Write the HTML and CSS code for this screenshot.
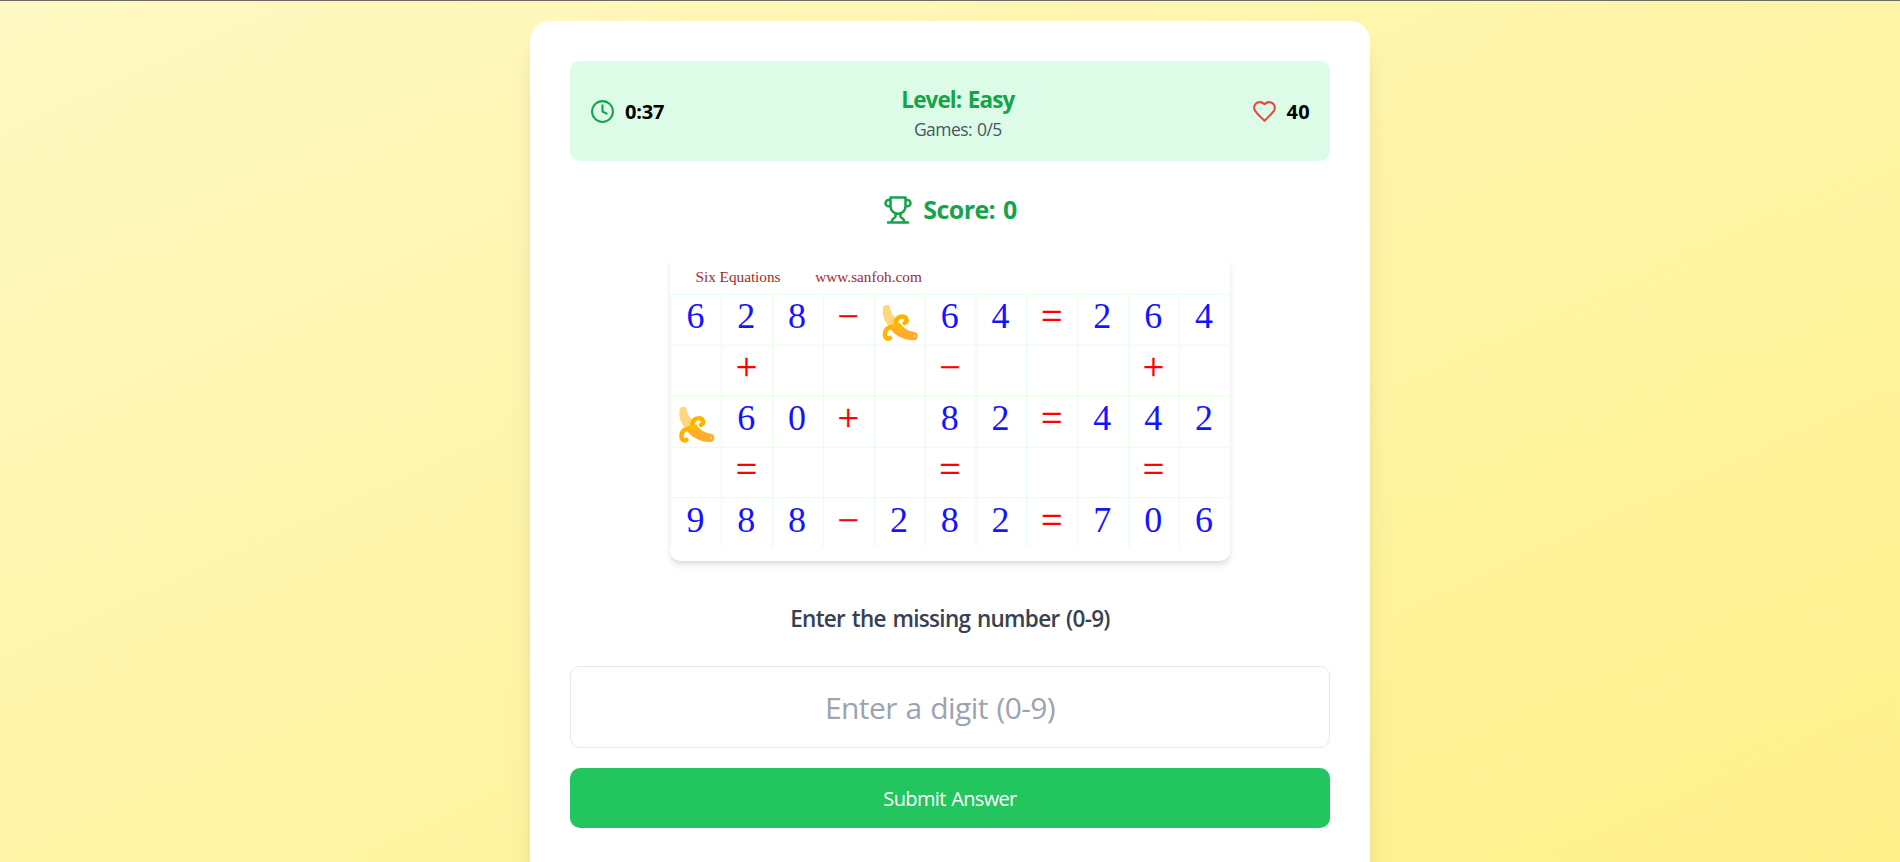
FILE: index.html
```html
<!DOCTYPE html>
<html lang="en">
<head>
<meta charset="utf-8">
<title>Banana Game</title>
<link rel="stylesheet" href="styles.css">
</head>
<body>
<main class="page">
  <section class="card">
    <header class="status">
      <div class="stat">
        <svg class="icon green" viewBox="0 0 24 24"><circle cx="12" cy="12" r="10"/><path d="M12 6v6l4 2"/></svg>
        <span class="stat-value">0:37</span>
      </div>
      <div class="level">
        <h2 class="level-name">Level: Easy</h2>
        <p class="games">Games: 0/5</p>
      </div>
      <div class="stat">
        <svg class="icon red" viewBox="0 0 24 24"><path d="M19 14c1.49-1.46 3-3.21 3-5.5A5.5 5.5 0 0 0 16.5 3c-1.76 0-3 .5-4.5 2-1.5-1.5-2.74-2-4.5-2A5.5 5.5 0 0 0 2 8.5c0 2.3 1.5 4.05 3 5.5l7 7Z"/></svg>
        <span class="stat-value lives">40</span>
      </div>
    </header>

    <div class="score">
      <svg class="trophy green" viewBox="0 0 24 24"><path d="M6 9H4.5a2.5 2.5 0 0 1 0-5H6M18 9h1.500a2.500 2.500 0 0 0 0-5H18M4 22h16M10 14.660V17c0 .55-.47.98-.97 1.210C7.850 18.750 7 20.240 7 22M14 14.660V17c0 .55.47.98.97 1.210C16.150 18.750 17 20.240 17 22M18 2H6v7a6 6 0 0 0 12 0V2Z"/></svg>
      <span class="score-value">Score: 0</span>
    </div>

    <svg class="puzzle" viewBox="0 0 560 306">
      <defs>
        <g id="banana">
          <path class="peel-light" d="M1 4C1 0 7 -1 8 3C9 8 11 12 15 15L14 24L9 24C3 18 0 12 1 4Z"/>
          <path class="fruit" d="M10 20L19 20C23 25 28 27 33 27.500C37 28.500 37 35.500 32 35.800C22 36 13 31 9 25Z"/>
          <path class="peel" d="M13.500 20C14 14 17 12 20 12C25 12 26 17 22.500 18.500M12 22.500C6 22 3 25 3 30C3 34 6 35 8 33.500"/>
          <path class="fold" d="M11 19.500L18 18L22 26L10 23Z"/>
          <circle class="tip" cx="32.500" cy="31.600" r="1.200"/>
        </g>
      </defs>
      <path class="grid" d="M0 39.300H559M0 90.300H559M0 141.300H559M0 192.300H559M0 242.700H559M.8 39V292M51.600 39V292M102.500 39V292M153.400 39V292M204.200 39V292M255.100 39V292M306 39V292M356.800 39V292M407.700 39V292M458.600 39V292M509.400 39V292"/>
      <g class="caption">
        <text x="25.500" y="26.500" textLength="85">Six Equations</text>
        <text x="145.300" y="26.500" textLength="106.500">www.sanfoh.com</text>
      </g>
      <g class="digits">
        <text y="73.300" x="25.400 76.200 127.100">628</text>
        <text y="73.300" x="279.700 330.600">64</text>
        <text y="73.300" x="432.300 483.200 534">264</text>
        <text y="175" x="76.200 127.100">60</text>
        <text y="175" x="279.700 330.600">82</text>
        <text y="175" x="432.300 483.200 534">442</text>
        <text y="276.800" x="25.400 76.200 127.100">988</text>
        <text y="276.800" x="228.900 279.700 330.600">282</text>
        <text y="276.800" x="432.300 483.200 534">706</text>
      </g>
      <g class="ops">
        <text y="74" x="178.200">−</text>
        <text y="74" x="381.700">=</text>
        <text y="124.900" x="76.400">+</text>
        <text y="124.900" x="279.900">−</text>
        <text y="124.900" x="483.400">+</text>
        <text y="175.700" x="178.200">+</text>
        <text y="175.700" x="381.700">=</text>
        <text y="226.600" x="76.400">=</text>
        <text y="226.600" x="279.900">=</text>
        <text y="226.600" x="483.400">=</text>
        <text y="277.500" x="178.200">−</text>
        <text y="277.500" x="381.700">=</text>
      </g>
      <use href="#banana" x="212" y="49.500"/>
      <use href="#banana" x="8.500" y="151.300"/>
    </svg>

    <form class="answer">
      <label class="prompt" for="digit">Enter the missing number (0-9)</label>
      <input class="digit" id="digit" type="text" inputmode="numeric" placeholder="Enter a digit (0-9)">
      <button class="submit" type="button">Submit Answer</button>
    </form>
  </section>
</main>
</body>
</html>
```
FILE: styles.css
```css
* { box-sizing: border-box; margin: 0; padding: 0; }

body {
  height: 862px;
  overflow: hidden;
  font-family: "Open Sans", "Noto Sans", sans-serif;
  color: #000;
}

.page {
  height: 862px;
  overflow: hidden;
  display: flex;
  justify-content: center;
  align-items: flex-start;
  padding-top: 20px;
  border-top: 1px solid #6f6c66;
  background: linear-gradient(to bottom right, #fef9c3, #fef08a);
}

.card {
  width: 840px;
  height: 900px;
  padding: 40px;
  border-radius: 20px;
  background: #fff;
  box-shadow: 0 25px 31px -6px rgba(0, 0, 0, .1), 0 10px 12.5px -7.5px rgba(0, 0, 0, .1);
}

.status {
  display: flex;
  justify-content: space-between;
  align-items: center;
  height: 100px;
  padding: 0 20px;
  border-radius: 10px;
  background: #dcfce7;
}

.stat { display: flex; align-items: center; gap: 10px; }
.stat-value { padding-top: 1px; font-size: 20px; line-height: 29px; font-weight: 700; letter-spacing: -.2px; }
.lives { letter-spacing: .3px; }

.icon, .trophy {
  fill: none;
  stroke: currentColor;
  stroke-width: 2;
  stroke-linecap: round;
  stroke-linejoin: round;
}
.icon { width: 25px; height: 25px; }
.trophy { width: 30px; height: 30px; }
.green { color: #16a34a; }
.red { color: #ef4444; }

.level { padding-top: 2px; text-align: center; }
.level-name { font-size: 22.500px; line-height: 35px; font-weight: 700; letter-spacing: -.9px; word-spacing: 1.500px; color: #16a34a; }
.games { font-size: 17.500px; line-height: 25px; letter-spacing: -.55px; word-spacing: 1px; color: #4b5563; }

.score {
  display: flex;
  justify-content: center;
  align-items: center;
  gap: 10px;
  height: 35px;
  margin-top: 31px;
  color: #16a34a;
}
.score-value { font-size: 25px; line-height: 35px; font-weight: 700; letter-spacing: -.6px; word-spacing: 2px; }

.puzzle {
  display: block;
  width: 560px;
  height: 306px;
  margin: 28px auto 0;
  border-radius: 10px;
  background: #fff;
  box-shadow: 0 5px 7.500px -1.250px rgba(0, 0, 0, .1), 0 2.500px 5px -2.500px rgba(0, 0, 0, .1);
}
.puzzle text { font-family: "Liberation Serif", serif; }
.grid { fill: none; stroke: #e9ffe9; stroke-width: 1.200; }
.caption { font-size: 15.300px; fill: #a52a2a; }
.digits, .ops { text-anchor: middle; }
.digits { font-size: 36px; fill: #1414ff; }
.ops { font-size: 38px; fill: #ff0000; stroke: #ff0000; stroke-width: .3; }
.peel-light { fill: #ffd67a; }
.fruit { fill: #ffae2b; }
.fold { fill: #ffb80d; }
.peel { fill: none; stroke: #ffb300; stroke-width: 4.500; stroke-linecap: round; }
.tip { fill: #ffd08a; }

.answer { display: flex; flex-direction: column; margin-top: 40px; }
.prompt {
  text-align: center;
  font-size: 22.500px;
  line-height: 35px;
  font-weight: 600;
  letter-spacing: -.700px;
  word-spacing: 1.500px;
  color: #374151;
}
.digit {
  height: 82px;
  margin-top: 30px;
  padding: 0 35px 0 15px;
  border: 1px solid #e5e7eb;
  border-radius: 10px;
  background: #fff;
  text-align: center;
  font-family: inherit;
  font-size: 30px;
  letter-spacing: -.6px;
  word-spacing: 1.500px;
}
.digit::placeholder { color: #9ca3af; opacity: 1; }
.submit {
  height: 60px;
  margin-top: 20px;
  border: 0;
  border-radius: 10px;
  background: #22c55e;
  color: #fff;
  font-family: inherit;
  font-size: 20px;
  font-weight: 500;
  letter-spacing: -.65px;
  word-spacing: 1px;
}
```
